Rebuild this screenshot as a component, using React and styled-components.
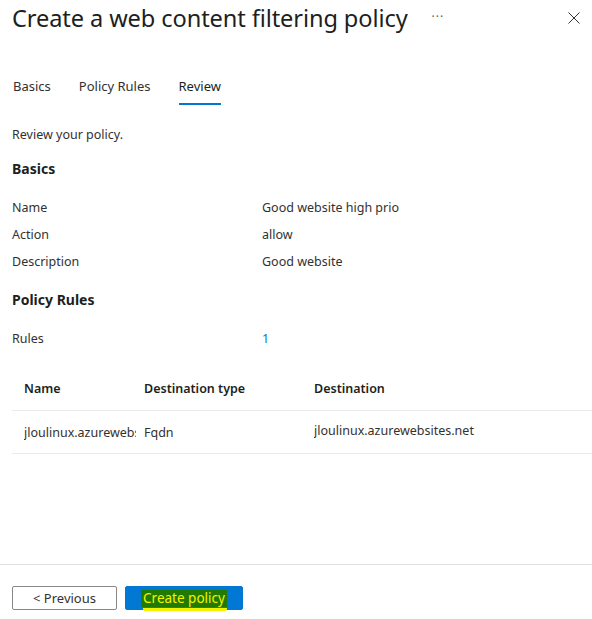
import React from 'react';
import styled, { createGlobalStyle } from 'styled-components';

const Global = createGlobalStyle`
  html, body {
    margin: 0;
    padding: 0;
    background: #fff;
  }
  body {
    font-family: "Segoe UI", "Noto Sans", "Open Sans", sans-serif;
    color: #323130;
    font-size: 13px;
  }
`;

const Panel = styled.div`
  width: 592px;
  height: 619px;
  display: flex;
  flex-direction: column;
  overflow: hidden;
`;

const Header = styled.div`
  display: flex;
  align-items: center;
  height: 36px;
  padding: 0 10px 0 12px;
`;

const Title = styled.h1`
  margin: 0;
  font-size: 23.6px;
  font-weight: 400;
  letter-spacing: -0.1px;
  color: #201f1e;
  white-space: nowrap;
`;

const More = styled.span`
  margin-left: 24px;
  color: #605e5c;
  font-size: 12px;
  letter-spacing: 1px;
  margin-top: -4px;
`;

const Close = styled.button`
  margin-left: auto;
  border: none;
  background: none;
  padding: 0;
  width: 16px;
  height: 16px;
  display: flex;
  align-items: center;
  justify-content: center;
  color: #323130;
`;

const Tabs = styled.div`
  display: flex;
  gap: 28px;
  padding: 0 13px;
  margin-top: 37px;
`;

const Tab = styled.div`
  font-size: 13px;
  padding: 4px 0 8px;
  border-bottom: 2px solid ${(p) => (p.$active ? '#0078d4' : 'transparent')};
  color: ${(p) => (p.$active ? '#201f1e' : '#323130')};
`;

const Content = styled.div`
  flex: 1;
  padding: 0 12px;
`;

const Intro = styled.p`
  margin: 21px 0 0;
  font-size: 12.5px;
`;

const Heading = styled.h2`
  margin: ${(p) => p.$top || '16px'} 0 0;
  font-size: 14px;
  font-weight: 700;
  color: #201f1e;
`;

const Props = styled.div`
  margin-top: ${(p) => p.$top || '20px'};
  display: grid;
  grid-template-columns: 250px 1fr;
  row-gap: 8px;
`;

const Label = styled.div`
  font-size: 12.5px;
  line-height: 19px;
`;

const Value = styled.div`
  font-size: 12.5px;
  line-height: 19px;
  color: ${(p) => (p.$link ? '#0078d4' : '#323130')};
`;

const Table = styled.div`
  margin-top: 19px;
  margin-right: -12px;
`;

const Row = styled.div`
  display: grid;
  grid-template-columns: 112px 162px 1fr;
  column-gap: 8px;
  padding: 0 12px;
  height: ${(p) => (p.$head ? '43px' : '42px')};
  align-items: center;
  border-bottom: 1px solid #edebe9;
`;

const Cell = styled.div`
  font-size: 12.5px;
  font-weight: ${(p) => (p.$head ? 600 : 400)};
  color: ${(p) => (p.$head ? '#201f1e' : '#323130')};
  white-space: nowrap;
  overflow: hidden;
  text-overflow: clip;
  margin-top: ${(p) => p.$shift || '0'};
`;

const Footer = styled.div`
  border-top: 1px solid #e1dfdd;
  padding: 21px 12px 9px;
  display: flex;
  gap: 8px;
`;

const Button = styled.button`
  height: 24px;
  width: ${(p) => p.$w};
  border-radius: 2px;
  font-family: inherit;
  font-size: 13px;
  padding: 0;
  display: flex;
  align-items: center;
  justify-content: center;
  border: 1px solid ${(p) => (p.$primary ? '#0078d4' : '#8a8886')};
  background: ${(p) => (p.$primary ? '#0078d4' : '#fff')};
  color: ${(p) => (p.$primary ? '#fff' : '#323130')};
`;

const Marked = styled.span`
  position: relative;
  background: #227a00;
  color: #f4f400;
  padding: 0 2px;
  font-size: 13.5px;
  line-height: 17px;
  &::after {
    content: '';
    position: absolute;
    left: 2px;
    right: 0;
    bottom: -4px;
    height: 3px;
    background: #f4f400;
    border-radius: 0 0 2px 2px;
  }
`;

export default function App() {
  return (
    <Panel>
      <Global />
      <Header>
        <Title>Create a web content filtering policy</Title>
        <More>···</More>
        <Close aria-label="Close">
          <svg width="12" height="12" viewBox="0 0 12 12">
            <path d="M0.5 0.5 L11.5 11.5 M11.5 0.5 L0.5 11.5" stroke="#323130" strokeWidth="1" />
          </svg>
        </Close>
      </Header>
      <Tabs>
        <Tab>Basics</Tab>
        <Tab>Policy Rules</Tab>
        <Tab $active>Review</Tab>
      </Tabs>
      <Content>
        <Intro>Review your policy.</Intro>
        <Heading>Basics</Heading>
        <Props>
          <Label>Name</Label>
          <Value>Good website high prio</Value>
          <Label>Action</Label>
          <Value>allow</Value>
          <Label>Description</Label>
          <Value>Good website</Value>
        </Props>
        <Heading $top="19px">Policy Rules</Heading>
        <Props $top="20px">
          <Label>Rules</Label>
          <Value $link>1</Value>
        </Props>
        <Table>
          <Row $head>
            <Cell $head>Name</Cell>
            <Cell $head>Destination type</Cell>
            <Cell $head>Destination</Cell>
          </Row>
          <Row>
            <Cell>jloulinux.azurewebsites.net</Cell>
            <Cell>Fqdn</Cell>
            <Cell $shift="-3px">jloulinux.azurewebsites.net</Cell>
          </Row>
        </Table>
      </Content>
      <Footer>
        <Button $w="105px">&lt; Previous</Button>
        <Button $primary $w="118px">
          <Marked>Create policy</Marked>
        </Button>
      </Footer>
    </Panel>
  );
}
